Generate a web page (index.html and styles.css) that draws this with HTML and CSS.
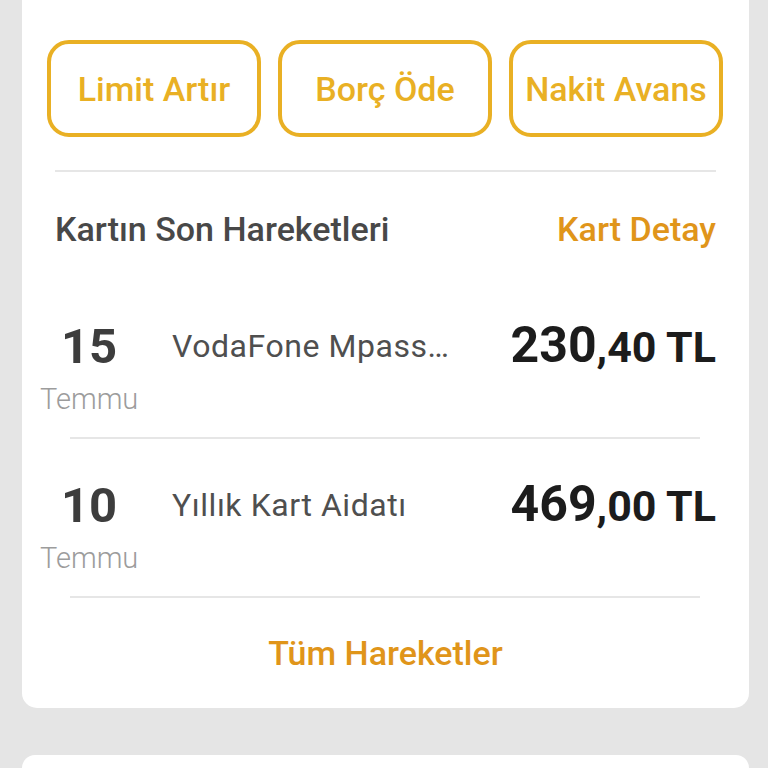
FILE: index.html
```html
<!DOCTYPE html>
<html lang="tr">
<head>
<meta charset="utf-8">
<title>Kart</title>
<link rel="stylesheet" href="styles.css">
</head>
<body>
<div class="card">
  <div class="actions">
    <button class="action">Limit Artır</button>
    <button class="action">Borç Öde</button>
    <button class="action">Nakit Avans</button>
  </div>
  <div class="rule"></div>
  <div class="head">
    <span class="head-title">Kartın Son Hareketleri</span>
    <span class="head-link">Kart Detay</span>
  </div>
  <div class="list">
    <div class="row">
      <div class="date"><div class="day">15</div><div class="month">Temmu</div></div>
      <div class="desc">VodaFone Mpass…</div>
      <div class="amount"><span class="int">230</span><span class="dec">,40 TL</span></div>
    </div>
    <div class="sep"></div>
    <div class="row">
      <div class="date"><div class="day">10</div><div class="month">Temmu</div></div>
      <div class="desc">Yıllık Kart Aidatı</div>
      <div class="amount"><span class="int">469</span><span class="dec">,00 TL</span></div>
    </div>
    <div class="sep"></div>
  </div>
  <div class="all">Tüm Hareketler</div>
</div>
<div class="card2"></div>
</body>
</html>
```
FILE: styles.css
```css
html, body {
  margin: 0;
  padding: 0;
  background: #e5e5e5;
  font-family: Roboto, "Liberation Sans", sans-serif;
  overflow: hidden;
}
.card {
  background: #ffffff;
  margin: -20px 19px 0 22px;
  padding-top: 60px;
  border-radius: 0 0 15px 15px;
}
.actions {
  display: grid;
  grid-template-columns: 214px 214px 214px;
  column-gap: 17px;
  margin: 0 25px;
}
.action {
  box-sizing: border-box;
  height: 97px;
  border: 4px solid #e9b024;
  border-radius: 22px;
  background: #ffffff;
  color: #e9b024;
  font-family: Roboto, "Liberation Sans", sans-serif;
  font-weight: 500;
  font-size: 34px;
  padding: 0;
  display: flex;
  align-items: center;
  justify-content: center;
}
.rule {
  height: 2px;
  background: #e6e6e6;
  margin: 33px 33px 0 33px;
}
.head {
  display: flex;
  justify-content: space-between;
  margin: 37px 33px 0 33px;
  font-size: 34px;
  font-weight: 500;
  line-height: 40px;
}
.head-title { color: #484848; }
.head-link { color: #e0951a; }
.list {
  margin: 31px 33px 0 18px;
}
.row {
  display: flex;
  align-items: flex-start;
  padding: 39px 0 20px 0;
}
.date {
  width: 98px;
  text-align: center;
}
.day {
  font-size: 49px;
  font-weight: 700;
  line-height: 56px;
  color: #3d3d3d;
}
.month {
  margin-top: 6px;
  font-size: 29px;
  font-weight: 300;
  line-height: 36px;
  color: #9c9c9c;
}
.desc {
  margin-left: 34px;
  margin-top: 9px;
  font-size: 32px;
  letter-spacing: 0.55px;
  line-height: 36px;
  color: #4f4f4f;
  flex: 1;
  white-space: nowrap;
}
.amount {
  margin-top: -2px;
  font-weight: 700;
  font-size: 50px;
  line-height: 56px;
  color: #1c1c1c;
  white-space: nowrap;
}
.dec {
  font-size: 43px;
}
.sep {
  height: 2px;
  background: #e6e6e6;
  margin: 0 16px 0 30px;
}
.all {
  text-align: center;
  margin-top: 35px;
  padding-bottom: 35px;
  font-size: 34px;
  font-weight: 500;
  line-height: 40px;
  color: #e0951a;
}
.card2 {
  background: #ffffff;
  margin: 47px 19px 0 22px;
  height: 13px;
  border-radius: 15px 15px 0 0;
}
```
